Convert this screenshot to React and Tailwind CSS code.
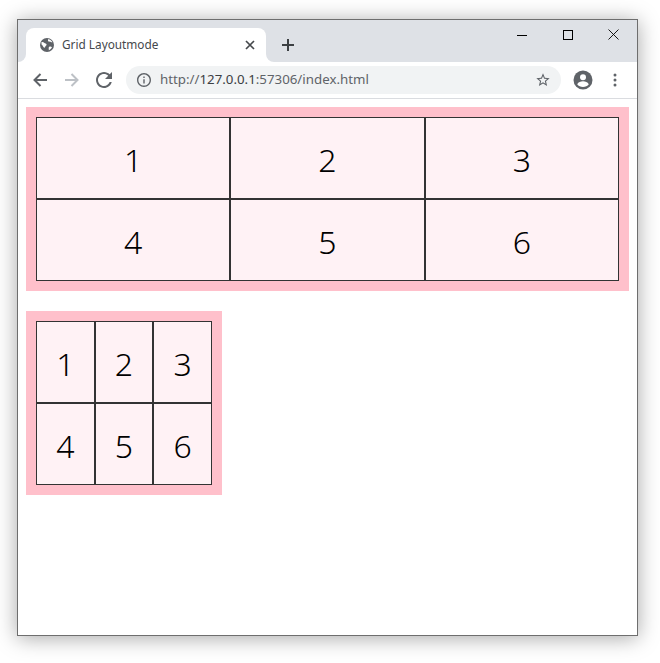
import React from 'react';

const cells = [1, 2, 3, 4, 5, 6];

function Demo({ className }) {
  return (
    <div className={'grid grid-cols-3 bg-[#ffc0cb] p-2.5 ' + className}>
      {cells.map(n => (
        <div key={n} className="flex h-[82px] items-center justify-center border border-[#333333] bg-[#fff2f5] pt-1 text-[32px] font-light text-black">
          {n}
        </div>
      ))}
    </div>
  );
}

function Tab() {
  return (
    <div className="relative ml-2 flex h-[34px] w-[240px] items-center rounded-t-lg bg-white pl-[13px] pr-[10px]">
      <span className="absolute -left-2 bottom-0 h-2 w-2 bg-white">
        <span className="block h-2 w-2 rounded-br-lg bg-[#dee1e6]" />
      </span>
      <span className="absolute -right-2 bottom-0 h-2 w-2 bg-white">
        <span className="block h-2 w-2 rounded-bl-lg bg-[#dee1e6]" />
      </span>
      <svg width="16" height="16" viewBox="0 0 16 16" className="shrink-0">
        <circle cx="8" cy="8" r="7" fill="#5f6368" />
        <path d="M2.500 5c1.200-.3 2.200.2 3 1 .6.600 1.600.500 2 1.200.4.800-.4 1.300-.9 1.800-.4.500-.3 1.200-.8 1.600-.5.300-1-.1-1.400-.6-.6-.8-.8-1.700-1.900-2.400z" fill="#ffffff" />
        <path d="M9 2c.4.800-.3 1.500.2 2.200.5.600 1.500.2 2.300.5.700.3 1.200.8 2 .6-.7-1.600-2.400-3-4.500-3.300zM10 10c1-.6 2.200-.5 3 .2-.7 1.300-1.800 2.400-3.200 3 .2-1.200-.5-2.200.2-3.200z" fill="#ffffff" />
      </svg>
      <span className="ml-[7px] flex-1 text-[11.800px] text-[#45484c]">Grid Layoutmode</span>
      <svg width="10" height="10" viewBox="0 0 10 10" className="mr-[1px]">
        <path d="M1 1l8 8M9 1l-8 8" stroke="#45484c" strokeWidth="1.700" />
      </svg>
    </div>
  );
}

function WindowControls() {
  return (
    <div className="ml-auto flex h-[29px] items-center self-start pr-[18px]">
      <svg width="10" height="10" viewBox="0 0 10 10">
        <path d="M0 5.500h10" stroke="#000000" />
      </svg>
      <svg width="10" height="10" viewBox="0 0 10 10" className="ml-[36px]">
        <rect x=".5" y=".5" width="9" height="9" fill="none" stroke="#000000" />
      </svg>
      <svg width="11" height="11" viewBox="0 0 11 11" className="ml-[35px]">
        <path d="M.5.500l10 10M10.500.500l-10 10" stroke="#000000" strokeWidth=".9" />
      </svg>
    </div>
  );
}

function Toolbar() {
  return (
    <div className="flex h-[37px] items-center border-b border-[#dadce0] bg-white pb-[1px] pl-[14px]">
      <svg width="16" height="16" viewBox="0 0 16 16">
        <path d="M15 8H2.500M8.500 2l-6 6 6 6" fill="none" stroke="#5f6368" strokeWidth="2" />
      </svg>
      <svg width="16" height="16" viewBox="0 0 16 16" className="ml-4">
        <path d="M1 8h12.500M7.500 2l6 6-6 6" fill="none" stroke="#bdc1c6" strokeWidth="2" />
      </svg>
      <svg width="16" height="16" viewBox="4 4 16 16" className="ml-4">
        <path d="M17.650 6.350C16.200 4.900 14.210 4 12 4c-4.420 0-7.990 3.580-7.990 8s3.570 8 7.990 8c3.730 0 6.840-2.550 7.730-6h-2.080c-.82 2.330-3.040 4-5.650 4-3.310 0-6-2.690-6-6s2.690-6 6-6c1.660 0 3.140.69 4.220 1.780L13 11h7V4l-2.350 2.350z" fill="#5f6368" />
      </svg>
      <div className="ml-[14px] flex h-[28px] w-[435px] items-center rounded-full bg-[#f1f3f4] pl-[11px] pr-[10px]">
        <svg width="14" height="14" viewBox="2 2 20 20">
          <path d="M11 7h2v2h-2zm0 4h2v6h-2zm1-9C6.480 2 2 6.480 2 12s4.480 10 10 10 10-4.480 10-10S17.520 2 12 2zm0 18c-4.410 0-8-3.590-8-8s3.590-8 8-8 8 3.590 8 8-3.590 8-8 8z" fill="#5f6368" />
        </svg>
        <span className="ml-[9px] flex-1 text-[13.300px] text-[#5f6368]">
          http://<span className="text-[#3c4043]">127.0.0.1</span>:57306/index.html
        </span>
        <svg width="16" height="16" viewBox="0 0 24 24">
          <path d="M22 9.240l-7.190-.62L12 2 9.190 8.630 2 9.240l5.460 4.730L5.820 21 12 17.270 18.180 21l-1.630-7.030L22 9.240zM12 15.400l-3.760 2.270 1-4.280-3.320-2.880 4.380-.38L12 6.100l1.710 4.040 4.380.38-3.320 2.880 1 4.280L12 15.400z" fill="#5f6368" />
        </svg>
      </div>
      <svg width="20" height="20" viewBox="0 0 20 20" className="ml-[12px]">
        <circle cx="10" cy="10" r="9.500" fill="#5f6368" />
        <circle cx="10" cy="7.300" r="3" fill="#ffffff" />
        <path d="M4.200 14.200c1.200-2 3.400-2.900 5.800-2.900s4.600.9 5.800 2.900c-1.300 1.700-3.400 2.800-5.800 2.800s-4.500-1.100-5.800-2.800z" fill="#ffffff" />
      </svg>
      <svg width="4" height="14" viewBox="0 0 4 14" className="ml-[20px]">
        <circle cx="2" cy="2" r="1.500" fill="#5f6368" />
        <circle cx="2" cy="7" r="1.500" fill="#5f6368" />
        <circle cx="2" cy="12" r="1.500" fill="#5f6368" />
      </svg>
    </div>
  );
}

export default function App() {
  return (
    <div className="h-[663px] w-[660px] overflow-hidden bg-white pl-[17px] pt-[19px] font-['Noto_Sans',sans-serif]">
      <div className="flex h-[617px] w-[621px] flex-col border border-[#6e6e6e] bg-white shadow-[0_2px_20px_rgba(0,0,0,0.35)]">
        <div className="flex h-[42px] items-end bg-[#dee1e6]">
          <Tab />
          <svg width="12" height="12" viewBox="0 0 12 12" className="mb-[11px] ml-4">
            <path d="M6 0v12M0 6h12" stroke="#3c4043" strokeWidth="2" />
          </svg>
          <WindowControls />
        </div>
        <Toolbar />
        <div className="flex flex-col gap-5 p-2">
          <Demo className="w-[603px]" />
          <Demo className="w-[196px]" />
        </div>
      </div>
    </div>
  );
}
